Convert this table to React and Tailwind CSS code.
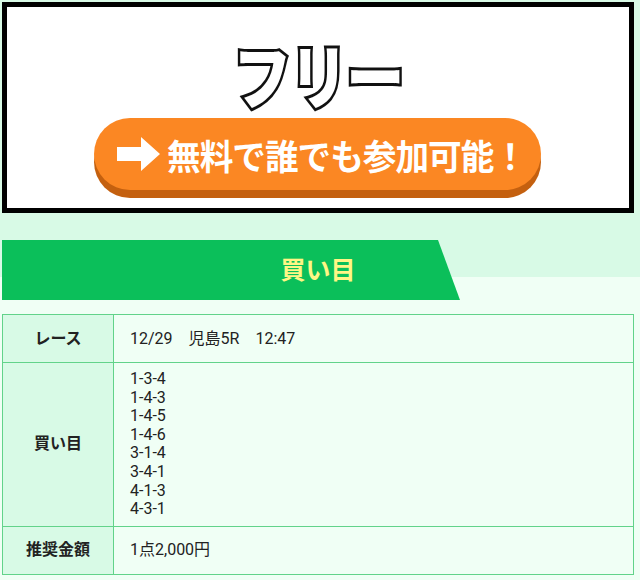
import React from "react";

const picks = ["1-3-4", "1-4-3", "1-4-5", "1-4-6", "3-1-4", "3-4-1", "4-1-3", "4-3-1"];

function Arrow() {
  return (
    <svg width="44" height="34" viewBox="0 0 44 34" className="shrink-0">
      <polygon points="0,10 24,10 24,0 43,17 24,34 24,24 0,24" fill="#fff" />
    </svg>
  );
}

export default function App() {
  return (
    <div className="w-[640px] min-h-[580px] bg-[#f0fff5] font-['Roboto','Noto_Sans_CJK_JP',sans-serif] text-[#222]">
      {/* banner */}
      <div className="bg-[#d8fae6] pt-[2px] pl-[2px] pr-[6px] pb-[27px]">
        <div className="h-[211px] border-[5px] border-black bg-white flex flex-col items-center">
          <div className="mt-[32px] h-[70px] flex items-center text-[70px] font-black leading-none text-white font-['Noto_Sans_CJK_JP',sans-serif] [-webkit-text-stroke:6px_#111] [paint-order:stroke_fill] tracking-[-2px] scale-x-[0.83]">
            フリー
          </div>
          <div className="mt-[9px] ml-[-2px] w-[447px] h-[72px] rounded-full bg-[#fb8723] shadow-[0_8px_0_#c4600f] flex items-center pl-[23px] gap-[6px]">
            <Arrow />
            <span className="text-white font-bold text-[35px] leading-none tracking-[-1px] font-['Noto_Sans_CJK_JP',sans-serif] scale-x-[0.96] origin-left whitespace-nowrap">
              無料で誰でも参加可能！
            </span>
          </div>
        </div>
      </div>

      {/* heading */}
      <div className="pl-[2px] pr-[6px] bg-[linear-gradient(to_bottom,#d8fae6_0,#d8fae6_37px,#f0fff5_37px)]">
        <div className="relative h-[60px] flex items-center justify-center">
          <div className="absolute inset-y-0 left-0 w-[458px] bg-[#0bbf5a] [clip-path:polygon(0_0,436px_0,100%_100%,0_100%)]" />
          <span className="relative text-[25px] font-bold text-[#fff685] font-['Noto_Sans_CJK_JP',sans-serif] mt-[-2px]">
            買い目
          </span>
        </div>
      </div>

      {/* table */}
      <div className="pl-[2px] pr-[6px] pt-[14px] pb-[6px]">
        <div className="border border-[#62d38a] text-[16px]">
          <div className="flex h-[48px] border-b border-[#62d38a]">
            <div className="w-[111px] bg-[#d8fae6] border-r border-[#62d38a] flex items-center justify-center font-bold">
              レース
            </div>
            <div className="flex-1 bg-[#f0fff5] flex items-center pl-[16px]">12/29　児島5R　12:47</div>
          </div>
          <div className="flex border-b border-[#62d38a]">
            <div className="w-[111px] bg-[#d8fae6] border-r border-[#62d38a] flex items-center justify-center font-bold">
              買い目
            </div>
            <div className="flex-1 bg-[#f0fff5] pl-[16px] py-[7px] leading-[18.6px]">
              {picks.map(p => (
                <div key={p}>{p}</div>
              ))}
            </div>
          </div>
          <div className="flex h-[47px]">
            <div className="w-[111px] bg-[#d8fae6] border-r border-[#62d38a] flex items-center justify-center font-bold">
              推奨金額
            </div>
            <div className="flex-1 bg-[#f0fff5] flex items-center pl-[16px]">1点2,000円</div>
          </div>
        </div>
      </div>
    </div>
  );
}
